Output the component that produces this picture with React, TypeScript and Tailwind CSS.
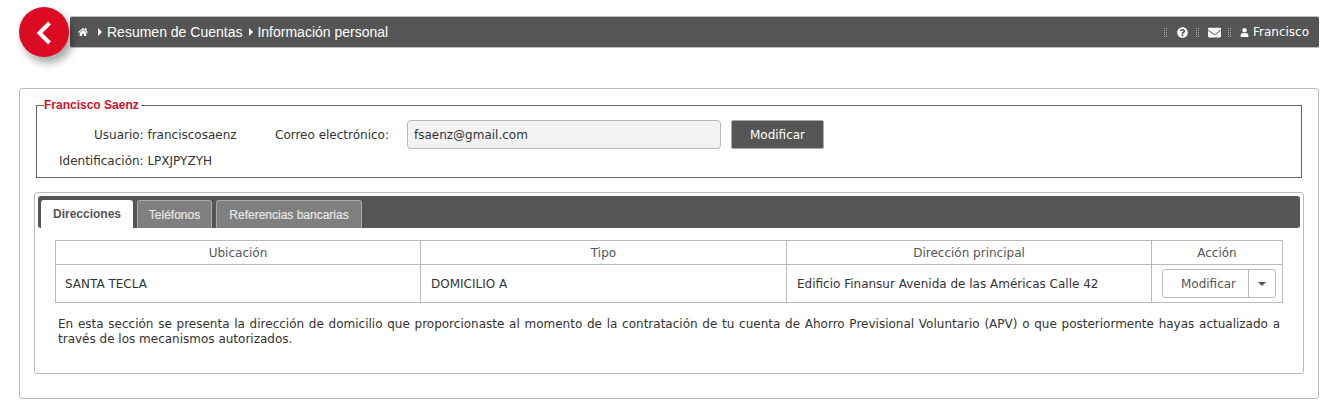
import { FaHome, FaQuestionCircle, FaEnvelope, FaUser } from "react-icons/fa";

const verdana = "font-['DejaVu_Sans',sans-serif]";

function Caret() {
  return <span className="block h-0 w-0 border-y-[4px] border-l-[4px] border-y-transparent border-l-white" />;
}

function Grip() {
  return (
    <span className="grid grid-cols-2 gap-px">
      {[0, 1, 2, 3, 4, 5, 6, 7, 8, 9].map((i) => (
        <span key={i} className="h-px w-px bg-[#aaaaaa]" />
      ))}
    </span>
  );
}

export default function App() {
  return (
    <div className={`relative h-[407px] w-[1330px] overflow-hidden bg-white pl-[19px] pr-[11px] pt-[16px] text-[12px] text-[#333333] ${verdana}`}>
      {/* back button sits over the breadcrumb bar */}
      <div className="absolute left-[19px] top-[7px] flex h-[50px] w-[50px] items-center justify-center rounded-full bg-[#dd0a24] shadow-[4px_6px_8px_rgba(0,0,0,0.35)]">
        <svg width="20" height="26" viewBox="0 0 20 26" fill="none">
          <path d="M15.5 4 L5.5 14 L15.5 24" stroke="white" strokeWidth="4" />
        </svg>
      </div>

      <div className="ml-[51px] flex h-[32px] items-center justify-between rounded-[2px] border-y border-[#bdbdbd] bg-[#555555] pl-[8px] pr-[10px] text-white">
        <div className="flex items-center font-['Liberation_Sans',sans-serif] text-[14px]">
          <FaHome className="mr-[10px] text-[10px]" />
          <Caret />
          <span className="ml-[5px] pt-px">Resumen de Cuentas</span>
          <span className="ml-[7px]"><Caret /></span>
          <span className="ml-[4px] pt-px">Información personal</span>
        </div>
        <div className="flex items-center text-[12px]">
          <Grip />
          <FaQuestionCircle className="ml-[10px] text-[11px]" />
          <span className="ml-[8px]"><Grip /></span>
          <FaEnvelope className="ml-[9px] text-[13px]" />
          <span className="ml-[7px]"><Grip /></span>
          <FaUser className="ml-[9px] text-[9px]" />
          <span className="ml-[4px]">Francisco</span>
        </div>
      </div>

      <div className="mt-[40px] h-[311px] rounded-[3px] border border-[#bbbbbb] bg-white px-[14px] pt-[9px]">
        <fieldset className="mx-[2px] h-[80px] border border-[#666666] px-[7px]">
          <legend className="pr-[2px] font-['Liberation_Sans',sans-serif] text-[12px] font-bold leading-[15px] text-[#d0112b]">Francisco Saenz</legend>
          <div className="mt-[7px] flex h-[29px] items-center">
            <span className="w-[193px] pl-[50px]">Usuario: franciscosaenz</span>
            <span className="w-[153px] whitespace-nowrap pl-[38px]">Correo electrónico:</span>
            <div className="ml-[17px] flex h-[29px] w-[314px] items-center rounded-[4px] border border-[#b5b5b5] bg-[#f2f2f2] px-[6px]">fsaenz@gmail.com</div>
            <button className="ml-[10px] h-[29px] w-[93px] rounded-[2px] border border-[#aaaaaa] bg-[#555555] text-center text-[12px] text-white">Modificar</button>
          </div>
          <div className="mt-[2px] pl-[15px] leading-[20px]">Identificación: LPXJPYZYH</div>
        </fieldset>

        <div className="mt-[14px] h-[182px] rounded-[3px] border border-[#bbbbbb] px-[3px] pt-[3px]">
          <div className="flex h-[32px] items-end gap-[4px] rounded-[3px] bg-[#555555] pl-[3px] font-['Liberation_Sans',sans-serif] text-[12px]">
            <div className="flex h-[28px] w-[92px] items-center justify-center rounded-t-[3px] bg-white font-bold text-[#555555]">Direcciones</div>
            <div className="flex h-[28px] w-[75px] items-center justify-center rounded-t-[3px] border border-b-0 border-[#aaaaaa] bg-[#7f7f7f] text-[#e8e8e8] [-webkit-text-stroke:0.2px]">Teléfonos</div>
            <div className="flex h-[28px] w-[146px] items-center justify-center rounded-t-[3px] border border-b-0 border-[#aaaaaa] bg-[#7f7f7f] text-[#e8e8e8] [-webkit-text-stroke:0.2px]">Referencias bancarias</div>
          </div>

          <table className="ml-[17px] mt-[12px] w-[1228px] table-fixed border-collapse border border-[#bbbbbb]">
            <thead>
              <tr className="h-[24px] text-[#555555]">
                <th className="w-[365px] border border-[#bbbbbb] font-normal">Ubicación</th>
                <th className="w-[366px] border border-[#bbbbbb] font-normal">Tipo</th>
                <th className="w-[365px] border border-[#bbbbbb] font-normal">Dirección principal</th>
                <th className="border border-[#bbbbbb] font-normal">Acción</th>
              </tr>
            </thead>
            <tbody>
              <tr className="h-[38px]">
                <td className="border border-[#bbbbbb] px-[9px]">SANTA TECLA</td>
                <td className="border border-[#bbbbbb] px-[10px]">DOMICILIO A</td>
                <td className="border border-[#bbbbbb] px-[10px]">Edificio Finansur Avenida de las Américas Calle 42</td>
                <td className="border border-[#bbbbbb] px-[10px]">
                  <div className="flex h-[29px] w-[114px] rounded-[3px] border border-[#bbbbbb] text-[#555555]">
                    <span className="flex w-[86px] items-center justify-center border-r border-[#bbbbbb] pl-[6px]">Modificar</span>
                    <span className="flex flex-1 items-center justify-center">
                      <span className="h-0 w-0 border-x-[4px] border-t-[4px] border-x-transparent border-t-[#555555]" />
                    </span>
                  </div>
                </td>
              </tr>
            </tbody>
          </table>

          <p className="ml-[20px] mr-[20px] mt-[14px] text-justify leading-[15px]">
            En esta sección se presenta la dirección de domicilio que proporcionaste al momento de la contratación de tu cuenta de Ahorro Previsional Voluntario (APV) o que posteriormente hayas actualizado a través de los mecanismos autorizados.
          </p>
        </div>
      </div>
    </div>
  );
}
